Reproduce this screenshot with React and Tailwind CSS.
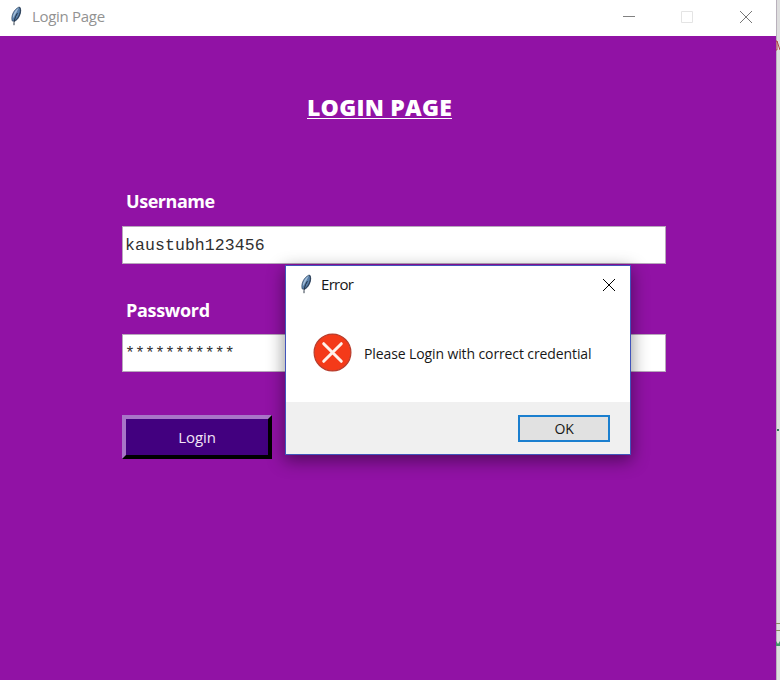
import React from "react";

function Feather() {
  return (
    <svg className="block h-5 w-4 shrink-0" viewBox="0 0 16 20">
      <path d="M4.2 15C2.8 10.1 5.5 3.4 11.3.9c1.9 1.2 1.9 5.2.1 9.2-1.3 2.9-3 4.5-4.8 5.1Z" fill="#587fa9" stroke="#3b506a" strokeWidth=".7" />
      <path d="M4.8 12.8C4.6 8.4 7 4 10.8 1.7L8.1 7Z" fill="#a4bed8" />
      <path d="M11.7 1.2c1.3 2.7.8 6.3-1.2 9.6-1.1 1.9-2.3 3.1-3.6 3.7" fill="none" stroke="#26384f" strokeWidth="1" />
      <path d="M6 19.2c-.2-3 .4-7.4 3.4-12" fill="none" stroke="#1c2838" strokeWidth=".9" />
    </svg>
  );
}

function CloseIcon({ color }) {
  return (
    <svg className="block h-[14px] w-[14px] shrink-0" viewBox="0 0 14 14">
      <path d="m1 1 12 12M13 1 1 13" fill="none" stroke={color} strokeWidth="1" />
    </svg>
  );
}

function TitleBar() {
  return (
    <header className="flex h-9 items-center bg-white pl-2">
      <div className="-mt-1"><Feather /></div>
      <span className="-mt-[5px] ml-2 whitespace-nowrap font-['Open_Sans',sans-serif] text-[15px] leading-5 tracking-[-0.3px] text-[#929292]">Login Page</span>
      <div className="-mt-[3px] ml-auto flex items-center pr-[23px]">
        <svg className="h-3 w-3" viewBox="0 0 12 12"><path d="M0 5.5h12" stroke="#818181" /></svg>
        <svg className="ml-[46px] h-3 w-3" viewBox="0 0 12 12"><path d="M.5.5h11v11H.5Z" fill="none" stroke="#e4e4e4" /></svg>
        <div className="ml-[46px]"><CloseIcon color="#777777" /></div>
      </div>
    </header>
  );
}

function LoginForm() {
  return (
    <main className="flex h-[644px] flex-col bg-[#9112a5] pl-[122px] pr-[110px] font-['Open_Sans',sans-serif] text-white">
      <h1 className="ml-[185px] mt-[58px] flex h-[26px] w-[146px] flex-col items-start whitespace-nowrap text-[23px] font-extrabold leading-[27px] tracking-[0.22px]">
        <span>LOGIN PAGE</span>
        <i className="-mt-[3px] block h-px w-[145px] shrink-0 bg-white" />
      </h1>
      <label className="ml-1 mt-[69px] h-6 text-[18px] font-bold leading-6 tracking-[-0.45px]">Username</label>
      <div className="mt-[13px] flex h-[38px] items-center border border-[#b8a7bc] bg-white pl-[2px] font-['Liberation_Mono',monospace] text-[16.5px] tracking-[0.08px] text-[#303030]"><span className="mt-[2px]">kaustubh123456</span></div>
      <label className="ml-1 mt-[34px] h-6 text-[18px] font-bold leading-6 tracking-[-0.3px]">Password</label>
      <div className="mt-3 flex h-[38px] items-center border border-[#b8a7bc] bg-white pl-[2px] font-['Liberation_Mono',monospace] text-[16.5px] tracking-[0.08px] text-[#303030]"><span className="mt-[3px]">***********</span></div>
      <button className="mt-[43px] flex h-11 w-[150px] items-center justify-center border-4 border-b-black border-l-[#a875c8] border-r-black border-t-[#a875c8] bg-[#42007f] text-[15px] tracking-[-0.1px] text-[#f2e5f7]">Login</button>
    </main>
  );
}

function ErrorDialog() {
  return (
    <section className="absolute left-[285px] top-[265px] flex h-[190px] w-[346px] flex-col border border-[#4255bb] bg-white font-['Open_Sans',sans-serif] text-[#171717] shadow-[0_5px_16px_1px_rgba(0,0,0,0.42)]">
      <header className="flex h-[38px] items-center pl-[12px] pr-[14px]">
        <div className="-mt-[3px]"><Feather /></div>
        <span className="-mt-[2px] ml-[7px] text-[15px] tracking-[-0.7px]">Error</span>
        <div className="ml-auto"><CloseIcon color="#000000" /></div>
      </header>
      <div className="flex h-[98px] items-center pl-[27px] pb-[1px]">
        <svg className="h-[39px] w-[39px] shrink-0" viewBox="0 0 39 39">
          <circle cx="19.5" cy="19.5" r="18.4" fill="#f43a19" stroke="#b83d2d" strokeWidth="1.2" />
          <path d="m10.7 10.7 17.6 17.6m0-17.6L10.7 28.3" fill="none" stroke="#fff1ea" strokeWidth="3" strokeLinecap="round" />
        </svg>
        <span className="ml-3 mt-[2px] whitespace-nowrap text-[14px] tracking-[-0.11px]">Please Login with correct credential</span>
      </div>
      <footer className="flex flex-1 items-start justify-end bg-[#f0f0f0] pr-5 pt-[13px]">
        <button className="flex h-[27px] w-[92px] items-center justify-center border-2 border-[#1b7fcf] bg-[#e1e1e1] text-[14px] tracking-[-0.3px]">OK</button>
      </footer>
    </section>
  );
}

export default function App() {
  return (
    <div className="relative flex h-[680px] w-[780px] overflow-hidden bg-[#dedede]">
      <div className="w-[776px]">
        <TitleBar />
        <LoginForm />
      </div>
      <svg className="block h-[680px] w-1" viewBox="0 0 4 680">
        <path d="M0 0h1v680H0Z" fill="#b9b1bc" />
        <path d="M0 41h1l3 9M1 41v9H0" fill="none" stroke="#ad4545" />
        <path d="M1 429h2v2H1Z" fill="#32705a" />
        <path d="M0 623.5h4M0 630.5h4" stroke="#8a8860" />
        <path d="m0 641 2 3 2-3v5H0Z" fill="#429568" />
      </svg>
      <ErrorDialog />
    </div>
  );
}
